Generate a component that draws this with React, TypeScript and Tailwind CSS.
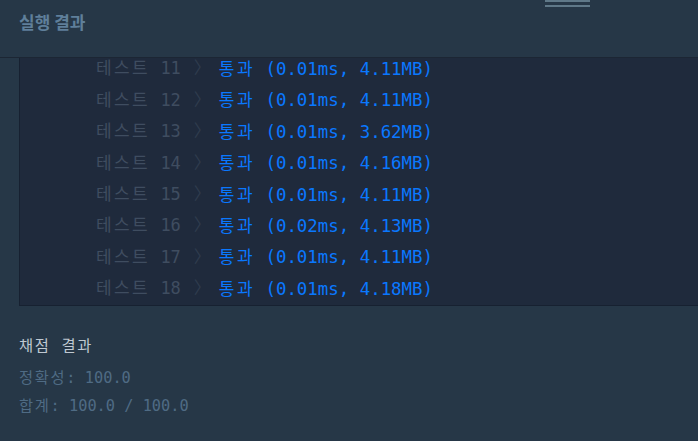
import React from "react";

const rows = [
  { n: 11, t: "0.01ms", m: "4.11MB" },
  { n: 12, t: "0.01ms", m: "4.11MB" },
  { n: 13, t: "0.01ms", m: "3.62MB" },
  { n: 14, t: "0.01ms", m: "4.16MB" },
  { n: 15, t: "0.01ms", m: "4.11MB" },
  { n: 16, t: "0.02ms", m: "4.13MB" },
  { n: 17, t: "0.01ms", m: "4.11MB" },
  { n: 18, t: "0.01ms", m: "4.18MB" },
];

const App = () => {
  return (
    <div className="w-[698px] h-[441px] overflow-hidden bg-[#263747] font-['DejaVu_Sans_Mono','Noto_Sans_CJK_KR',monospace]">
      {/* header */}
      <div className="relative h-[58px] border-b border-[#1c2634]">
        <div className="absolute left-[545px] top-0 flex flex-col gap-[3px]">
          <div className="w-[45px] h-[2px] bg-[#5f7888]" />
          <div className="w-[45px] h-[2px] bg-[#5f7888]" />
        </div>
        <h2 className="pl-[19px] pt-[10px] text-[17px] leading-[24px] font-bold text-[#5f7f9a] font-['Noto_Sans_CJK_KR',sans-serif]">
          실행 결과
        </h2>
      </div>

      {/* console output */}
      <div className="ml-[19px] overflow-hidden border-l border-b border-[#172131] bg-[#1f2a3c]">
        <div className="-mt-[4.5px]">
          {rows.map((r) => (
            <div key={r.n} className="flex items-center h-[31.4px] text-[17px] whitespace-pre">
              <span className="w-[76px]" />
              <span className="text-[#3f4d60]">
                <span className="tracking-[2.4px]">테스트</span> {r.n}
              </span>
              <span className="ml-[13px] text-[#2f3c4e]">〉</span>
              <span className="ml-[8px] text-[#0a78ff]">
                <span className="tracking-[2.4px]">통과</span>
                <span className="text-[17.4px]"> ({r.t}, {r.m})</span>
              </span>
            </div>
          ))}
        </div>
      </div>

      {/* grading */}
      <div className="pl-[19px] pt-[30px] text-[15.3px] whitespace-pre">
        <div className="leading-[20px] text-[#bfc8d1] tracking-[1.7px]">채점 결과</div>
        <div className="mt-[8px] leading-[28px] text-[#4f6b84]">
          <div>
            <span className="tracking-[1.7px]">정확성</span>: 100.0
          </div>
          <div>
            <span className="tracking-[1.7px]">합계</span>: 100.0 / 100.0
          </div>
        </div>
      </div>
    </div>
  );
};

export default App;
